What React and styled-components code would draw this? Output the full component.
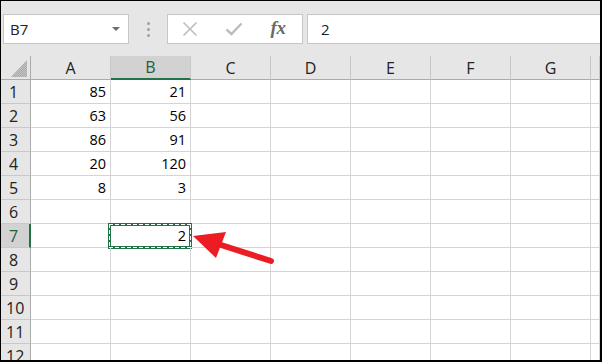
import React from 'react';
import styled, { createGlobalStyle, css } from 'styled-components';

const GREEN = '#217346';

const GlobalStyle = createGlobalStyle`
  html, body {
    margin: 0;
    padding: 0;
    background: #fff;
  }
  body {
    font-family: "Open Sans", "Liberation Sans", sans-serif;
  }
`;

const Frame = styled.div`
  width: 602px;
  height: 362px;
  box-sizing: border-box;
  border: solid #000;
  border-width: 1px 2px 2px 1px;
  background: #e6e6e6;
  position: relative;
  overflow: hidden;
  display: flex;
  flex-direction: column;
`;

const Toolbar = styled.div`
  height: 55px;
  flex-shrink: 0;
  box-sizing: border-box;
  padding: 13px 0 0 2px;
  display: flex;
  align-items: flex-start;
`;

const Box = styled.div`
  height: 30px;
  box-sizing: border-box;
  border: 1px solid #c6c6c6;
  background: #fff;
  display: flex;
  align-items: center;
`;

const NameBox = styled(Box)`
  width: 126px;
  padding: 0 8px 0 6px;
  justify-content: space-between;
  font-size: 15px;
  color: #222;
`;

const Caret = styled.span`
  width: 0;
  height: 0;
  border-left: 4px solid transparent;
  border-right: 4px solid transparent;
  border-top: 4px solid #6d6d6d;
`;

const Grip = styled.div`
  width: 38px;
  height: 30px;
  display: flex;
  flex-direction: column;
  align-items: center;
  justify-content: center;
  gap: 3px;

  span {
    width: 3px;
    height: 3px;
    border-radius: 50%;
    background: #a0a0a0;
  }
`;

const FxButtons = styled(Box)`
  width: 136px;
`;

const FxButton = styled.div`
  width: 44px;
  height: 100%;
  display: flex;
  align-items: center;
  justify-content: center;
`;

const FxLabel = styled.span`
  font-family: "Liberation Serif", "DejaVu Serif", serif;
  font-style: italic;
  font-weight: bold;
  font-size: 19px;
  color: #6a6a6a;
  margin-top: -2px;
  letter-spacing: -0.5px;
`;

const FormulaInput = styled(Box)`
  flex: 1;
  margin-left: 4px;
  border-right: none;
  padding-left: 13px;
  font-size: 15px;
  color: #222;
`;

const Sheet = styled.div`
  flex: 1;
  display: grid;
  grid-template-columns: 30px repeat(7, 80px) 1fr;
  grid-template-rows: 24px;
  grid-auto-rows: 24px;
  background: #fff;
  overflow: hidden;
`;

const dashH = 'repeating-linear-gradient(90deg, #fff 0 4px, transparent 4px 6px)';
const dashV = 'repeating-linear-gradient(180deg, #fff 0 4px, transparent 4px 6px)';

const Cell = styled.div`
  box-sizing: border-box;
  border-right: 1px solid #d4d4d4;
  border-bottom: 1px solid #d4d4d4;
  display: flex;
  align-items: center;
  justify-content: flex-end;
  padding-right: 4px;
  font-size: 14.5px;
  color: #000;
  position: relative;

  ${({ $copied }) =>
    $copied &&
    css`
      &::before {
        content: '';
        position: absolute;
        top: -1px;
        left: -3px;
        right: -2px;
        bottom: -2px;
        border: 3px solid ${GREEN};
        box-sizing: border-box;
      }
      &::after {
        content: '';
        position: absolute;
        top: 0;
        left: -2px;
        right: -1px;
        bottom: -1px;
        background:
          ${dashH} top left / 100% 1px no-repeat,
          ${dashH} bottom left / 100% 1px no-repeat,
          ${dashV} top left / 1px 100% no-repeat,
          ${dashV} top right / 1px 100% no-repeat;
      }
    `}
`;

const HeadCell = styled.div`
  box-sizing: border-box;
  background: ${({ $active }) => ($active ? '#d2d2d2' : '#e6e6e6')};
  border-right: 1px solid #c8c8c8;
  border-bottom: ${({ $active }) => ($active ? `2px solid ${GREEN}` : '1px solid #ababab')};
  display: flex;
  align-items: center;
  justify-content: center;
  font-size: 16px;
  color: ${({ $active }) => ($active ? '#1f5e3b' : '#222')};
`;

const Corner = styled(HeadCell)`
  border-right: 1px solid #ababab;
  align-items: flex-end;
  justify-content: flex-end;
  padding: 0 3px 2px 0;
`;

const RowHead = styled.div`
  box-sizing: border-box;
  background: ${({ $active }) => ($active ? '#d2d2d2' : '#e6e6e6')};
  border-right: ${({ $active }) => ($active ? `2px solid ${GREEN}` : '1px solid #ababab')};
  border-bottom: 1px solid #c8c8c8;
  display: flex;
  align-items: center;
  padding-left: ${({ $wide }) => ($wide ? '5px' : '8px')};
  font-size: 16px;
  color: ${({ $active }) => ($active ? '#1f5e3b' : '#222')};
`;

const Arrow = styled.svg`
  position: absolute;
  left: 0;
  top: 0;
  pointer-events: none;
`;

const columns = ['A', 'B', 'C', 'D', 'E', 'F', 'G', ''];

const data = {
  1: ['85', '21'],
  2: ['63', '56'],
  3: ['86', '91'],
  4: ['20', '120'],
  5: ['8', '3'],
  7: ['', '2'],
};

const App = () => {
  const rows = Array.from({ length: 12 }, (_, i) => i + 1);

  return (
    <>
      <GlobalStyle />
      <Frame>
        <Toolbar>
          <NameBox>
            <span>B7</span>
            <Caret />
          </NameBox>
          <Grip>
            <span />
            <span />
            <span />
          </Grip>
          <FxButtons>
            <FxButton>
              <svg width="16" height="16" viewBox="0 0 16 16">
                <path d="M1.5 1.5 L14.5 14.5 M14.5 1.5 L1.5 14.5" stroke="#bdbdbd" strokeWidth="1.6" fill="none" />
              </svg>
            </FxButton>
            <FxButton>
              <svg width="18" height="14" viewBox="0 0 18 14">
                <path d="M1.5 7.5 L6.5 12 L16.5 1.5" stroke="#bdbdbd" strokeWidth="2.4" fill="none" />
              </svg>
            </FxButton>
            <FxButton>
              <FxLabel>fx</FxLabel>
            </FxButton>
          </FxButtons>
          <FormulaInput>2</FormulaInput>
        </Toolbar>

        <Sheet>
          <Corner>
            <svg width="16" height="17" viewBox="0 0 16 17">
              <defs>
                <pattern id="hatch" width="2" height="2" patternUnits="userSpaceOnUse">
                  <rect width="2" height="2" fill="#c4c4c4" />
                  <rect width="1" height="1" fill="#a8a8a8" />
                  <rect x="1" y="1" width="1" height="1" fill="#a8a8a8" />
                </pattern>
              </defs>
              <polygon points="0,17 16,17 16,0" fill="url(#hatch)" />
            </svg>
          </Corner>
          {columns.map((c, i) => (
            <HeadCell key={i} $active={c === 'B'}>
              {c}
            </HeadCell>
          ))}
          {rows.map((r) => (
            <React.Fragment key={r}>
              <RowHead $active={r === 7} $wide={r >= 10}>
                {r}
              </RowHead>
              {columns.map((c, i) => (
                <Cell key={i} $copied={r === 7 && c === 'B'}>
                  {(data[r] && data[r][i]) || ''}
                </Cell>
              ))}
            </React.Fragment>
          ))}
        </Sheet>

        <Arrow width="600" height="359" viewBox="0 0 600 359">
          <line x1="217" y1="243" x2="270" y2="260" stroke="#ec1c24" strokeWidth="6" strokeLinecap="round" />
          <polygon points="192,235 225,231 215,257" fill="#ec1c24" />
        </Arrow>
      </Frame>
    </>
  );
};

export default App;
